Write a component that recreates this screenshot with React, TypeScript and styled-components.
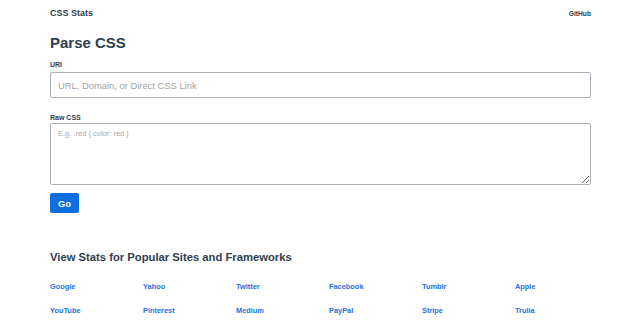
import React from "react";
import styled, { createGlobalStyle } from "styled-components";

const Global = createGlobalStyle`
  html, body { margin: 0; padding: 0; background: #fff; }
  body { font-family: "Liberation Sans", Arial, sans-serif; color: #303e4e; }
  * { box-sizing: border-box; }
`;

const Page = styled.div`
  width: 640px;
  padding: 7px 49px 0 50px;
`;

const Header = styled.header`
  display: flex;
  justify-content: space-between;
  align-items: baseline;
  height: 12px;
`;

const Brand = styled.a`
  font-size: 9px;
  line-height: 12px;
  font-weight: 700;
  color: #303e4e;
  text-decoration: none;
`;

const NavLink = styled.a`
  font-size: 6.7px;
  line-height: 12px;
  font-weight: 700;
  color: #303e4e;
  text-decoration: none;
`;

const Title = styled.h1`
  margin: 15px 0 0;
  font-size: 15px;
  line-height: 18px;
  font-weight: 700;
  color: #303e4e;
`;

const Form = styled.form`
  display: flex;
  flex-direction: column;
  margin-top: 8px;
`;

const Label = styled.label<{ $top: number; $gap: number }>`
  display: block;
  margin-top: ${(p) => p.$top}px;
  margin-bottom: ${(p) => p.$gap}px;
  font-size: 7px;
  line-height: 9px;
  font-weight: 700;
  color: #303e4e;
`;

const TextInput = styled.input`
  display: block;
  width: 100%;
  height: 26px;
  margin: 0;
  padding: 0 7px;
  font-family: "Liberation Sans", Arial, sans-serif;
  font-size: 9.4px;
  color: #333;
  border: 1px solid #aab1b8;
  border-radius: 2px;
  background: #fff;
  outline: none;
  &::placeholder { color: #a3a3a3; }
`;

const TextArea = styled.textarea`
  display: block;
  width: 100%;
  height: 62px;
  margin: 0;
  padding: 5px 7px;
  font-family: "Liberation Sans", Arial, sans-serif;
  font-size: 7.5px;
  line-height: 9px;
  color: #333;
  border: 1px solid #aab1b8;
  border-radius: 2px;
  background: #fff;
  outline: none;
  &::placeholder { color: #a8a8a8; }
`;

const GoButton = styled.button`
  align-self: flex-start;
  margin-top: 8px;
  width: 29px;
  height: 20px;
  padding: 0;
  border: none;
  border-radius: 2px;
  background: #0d6fdf;
  color: #fff;
  font-family: "Liberation Sans", Arial, sans-serif;
  font-size: 9.4px;
  font-weight: 700;
  cursor: pointer;
`;

const SectionTitle = styled.h2`
  margin: 37px 0 0;
  font-size: 11.25px;
  line-height: 14px;
  font-weight: 700;
  color: #303e4e;
`;

const SiteGrid = styled.div`
  display: grid;
  grid-template-columns: repeat(6, 93px);
  grid-auto-rows: 24px;
  margin-top: 11px;
`;

const SiteLink = styled.a`
  font-size: 7.4px;
  line-height: 24px;
  font-weight: 700;
  color: #1f6fe2;
  text-decoration: none;
`;

const sites = [
  "Google", "Yahoo", "Twitter", "Facebook", "Tumblr", "Apple",
  "YouTube", "Pinterest", "Medium", "PayPal", "Stripe", "Trulia",
];

export default function App() {
  return (
    <>
      <Global />
      <Page>
        <Header>
          <Brand href="#">CSS Stats</Brand>
          <NavLink href="#">GitHub</NavLink>
        </Header>
        <Title>Parse CSS</Title>
        <Form onSubmit={(e) => e.preventDefault()}>
          <Label htmlFor="uri" $top={0} $gap={3}>URI</Label>
          <TextInput id="uri" placeholder="URL, Domain, or Direct CSS Link" />
          <Label htmlFor="raw" $top={15} $gap={1}>Raw CSS</Label>
          <TextArea id="raw" placeholder="E.g. .red { color: red }" />
          <GoButton type="submit">Go</GoButton>
        </Form>
        <SectionTitle>View Stats for Popular Sites and Frameworks</SectionTitle>
        <SiteGrid>
          {sites.map((s) => (
            <SiteLink key={s} href="#">{s}</SiteLink>
          ))}
        </SiteGrid>
      </Page>
    </>
  );
}
